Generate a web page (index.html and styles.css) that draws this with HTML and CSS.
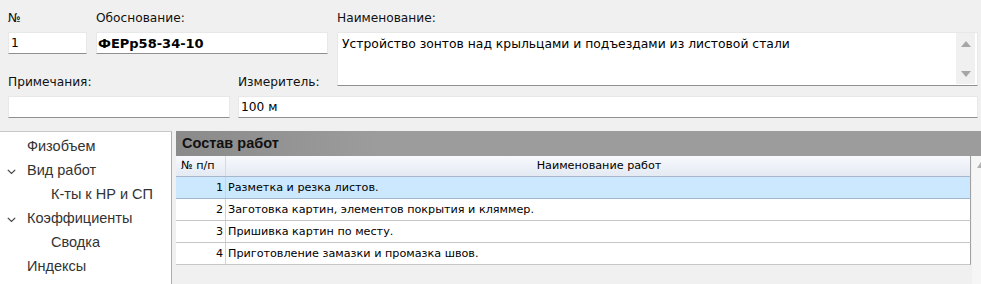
FILE: index.html
```html
<!DOCTYPE html>
<html lang="ru">
<head>
    <meta charset="UTF-8">
    <title>Расценка</title>
    <link rel="stylesheet" href="styles.css">
</head>
<body>
    <div class="form">
        <label class="lbl lbl-num">№</label>
        <input class="inp inp-num" value="1" readonly>
        <label class="lbl lbl-base">Обоснование:</label>
        <input class="inp inp-base" value="ФЕРр58-34-10" readonly>
        <label class="lbl lbl-name">Наименование:</label>
        <div class="memo">
            <div class="memo-text">Устройство зонтов над крыльцами и подъездами из листовой стали</div>
            <div class="memo-scroll">
                <span class="tri tri-up"></span>
                <span class="tri tri-down"></span>
            </div>
        </div>
        <label class="lbl lbl-note">Примечания:</label>
        <input class="inp inp-note" value="" readonly>
        <label class="lbl lbl-unit">Измеритель:</label>
        <input class="inp inp-unit" value="100 м" readonly>
    </div>

    <div class="bottom">
        <ul class="tree">
            <li class="node">Физобъем</li>
            <li class="node open"><svg class="chev" width="9" height="6" viewBox="0 0 9 6"><polyline points="0.8,0.8 4.5,4.5 8.2,0.8" fill="none" stroke="#444" stroke-width="1.2"/></svg>Вид работ</li>
            <li class="node child">К-ты к НР и СП</li>
            <li class="node open"><svg class="chev" width="9" height="6" viewBox="0 0 9 6"><polyline points="0.8,0.8 4.5,4.5 8.2,0.8" fill="none" stroke="#444" stroke-width="1.2"/></svg>Коэффициенты</li>
            <li class="node child">Сводка</li>
            <li class="node">Индексы</li>
        </ul>

        <div class="works">
            <div class="works-title">Состав работ</div>
            <div class="works-body">
                <div class="grid">
                    <div class="row head">
                        <div class="cell num">№ п/п</div>
                        <div class="cell name">Наименование работ</div>
                    </div>
                    <div class="row selected">
                        <div class="cell num">1</div>
                        <div class="cell name">Разметка и резка листов.</div>
                    </div>
                    <div class="row">
                        <div class="cell num">2</div>
                        <div class="cell name">Заготовка картин, элементов покрытия и кляммер.</div>
                    </div>
                    <div class="row">
                        <div class="cell num">3</div>
                        <div class="cell name">Пришивка картин по месту.</div>
                    </div>
                    <div class="row">
                        <div class="cell num">4</div>
                        <div class="cell name">Приготовление замазки и промазка швов.</div>
                    </div>
                </div>
                <div class="vscroll"><span class="tri tri-up"></span></div>
            </div>
        </div>
    </div>
</body>
</html>
```

FILE: styles.css
```css
body {
    margin: 0;
    width: 981px;
    height: 284px;
    overflow: hidden;
    background: #f0f0f0;
    font-family: "DejaVu Sans", Verdana, sans-serif;
    font-size: 12.2px;
    color: #000;
}

/* верхняя форма */
.form {
    display: grid;
    grid-template-columns: 79px 9px 134px 8px 90px 9px 641px;
    grid-template-rows: 22px 22px 20px 22px 22px;
    padding: 10px 0 0 8px;
}
.lbl {
    line-height: 16px;
    color: #111;
}
.inp {
    height: 22px;
    box-sizing: border-box;
    margin: 0;
    padding: 0 2px;
    border: 1px solid #e8e8e8;
    border-bottom-color: #8f8f8f;
    background: #fff;
    font: inherit;
    color: #000;
    outline: none;
}
.lbl-num { grid-column: 1; grid-row: 1; }
.inp-num { grid-column: 1; grid-row: 2; }
.lbl-base { grid-column: 3 / 6; grid-row: 1; }
.inp-base { grid-column: 3 / 6; grid-row: 2; font-weight: bold; font-size: 13px; padding-left: 1px; }
.lbl-name { grid-column: 7; grid-row: 1; }
.lbl-note { grid-column: 1 / 4; grid-row: 4; }
.inp-note { grid-column: 1 / 4; grid-row: 5; }
.lbl-unit { grid-column: 5 / 7; grid-row: 4; }
.inp-unit { grid-column: 5 / 8; grid-row: 5; }

.memo {
    grid-column: 7;
    grid-row: 2 / 5;
    align-self: start;
    height: 54px;
    box-sizing: border-box;
    display: flex;
    background: #fff;
    border: 1px solid #e8e8e8;
    border-bottom-color: #8f8f8f;
}
.memo-text {
    flex: 1;
    padding: 3px 4px;
    line-height: 16px;
    font-size: 12.35px;
}
.memo-scroll {
    width: 19px;
    margin: 0 2px 1px 0;
    background: #f0f0f0;
    display: flex;
    flex-direction: column;
    align-items: center;
    justify-content: space-between;
    padding: 8px 0 7px;
}
.tri {
    width: 0;
    height: 0;
    border-left: 5px solid transparent;
    border-right: 5px solid transparent;
}
.tri-up { border-bottom: 6px solid #a6a6a6; }
.tri-down { border-top: 6px solid #a6a6a6; }

/* нижняя часть */
.bottom {
    display: flex;
    margin-top: 13px;
    height: 153px;
    overflow: hidden;
}
.tree {
    list-style: none;
    margin: 0;
    padding: 2px 0 0;
    width: 171px;
    flex-shrink: 0;
    background: #fff;
    border-top: 1px solid #c8c8c8;
    border-right: 1px solid #adadad;
    font-family: "Liberation Sans", Arial, sans-serif;
    font-size: 14.5px;
    color: #333;
}
.node {
    height: 24px;
    line-height: 24px;
    padding-left: 27px;
    position: relative;
}
.node.child {
    padding-left: 51px;
}
.chev {
    position: absolute;
    left: 7px;
    top: 11px;
}

.works {
    flex: 1;
    margin-left: 4px;
    display: flex;
    flex-direction: column;
    min-width: 0;
}
.works-title {
    height: 25px;
    line-height: 25px;
    padding-left: 6px;
    background: linear-gradient(to right, #8a8a8a, #9c9c9c 25%, #9c9c9c);
    font-family: "Liberation Sans", Arial, sans-serif;
    font-weight: bold;
    font-size: 14.5px;
    color: #111;
}
.works-body {
    display: flex;
    flex: 1;
}
.grid {
    width: 795px;
    flex-shrink: 0;
    font-size: 11.2px;
}
.row {
    display: grid;
    grid-template-columns: 50px 1fr;
    height: 22px;
    box-sizing: border-box;
    background: #fff;
    border-right: 1px solid #a0a0a0;
    border-bottom: 1px solid #c6c6c6;
    line-height: 21px;
}
.row.head {
    height: 21px;
    line-height: 20px;
    background: linear-gradient(#f7f9fd, #e4eaf3);
    border-bottom-color: #a9b6c7;
}
.row.selected {
    background: #cce8ff;
    border-bottom-color: #9fb6cd;
}
.cell {
    white-space: nowrap;
    overflow: hidden;
}
.cell.num {
    text-align: right;
    padding-right: 2px;
    border-right: 1px solid #d3d3d3;
}
.row.head .cell.num {
    text-align: left;
    padding-left: 5px;
    border-right-color: #d5dbe4;
}
.cell.name {
    padding-left: 2px;
}
.row.head .cell.name {
    text-align: center;
}
.vscroll {
    width: 17px;
    flex-shrink: 0;
    margin-left: 1px;
    background: #f6f6f6;
    display: flex;
    justify-content: center;
    padding-top: 6px;
    box-sizing: border-box;
}
.vscroll .tri-up {
    border-left-width: 4px;
    border-right-width: 4px;
    border-bottom: 6px solid #b0b0b0;
}
```
